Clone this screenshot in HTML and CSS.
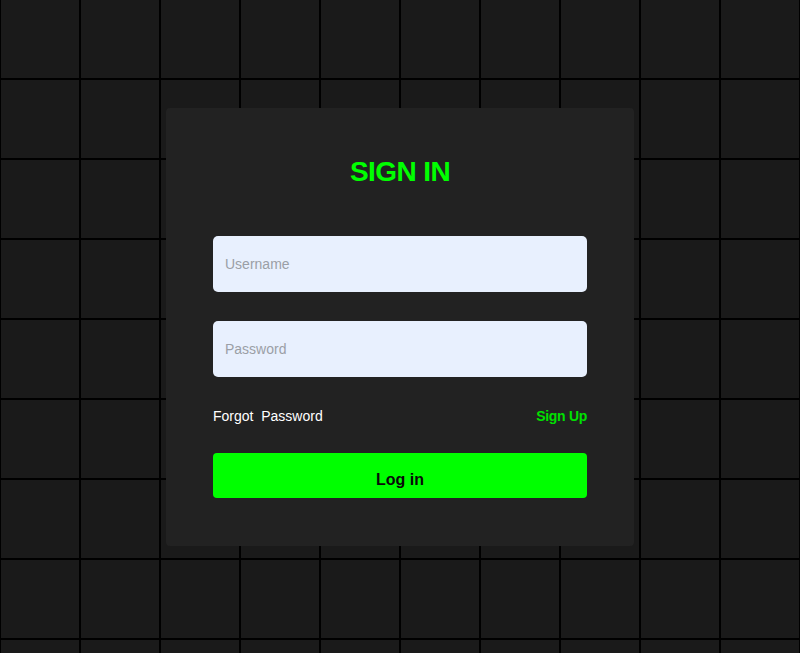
FILE: index.html
```html
<!DOCTYPE html>
<html lang="en">
<head>
<meta charset="utf-8">
<title>Sign In</title>
<link rel="stylesheet" href="styles.css">
</head>
<body>
<main class="page">
  <form class="card" onsubmit="return false">
    <h1 class="title">SIGN IN</h1>
    <input class="field" type="text" placeholder="Username">
    <input class="field field-gap" type="password" placeholder="Password">
    <div class="links">
      <a class="forgot" href="#">Forgot&nbsp; Password</a>
      <a class="signup" href="#">Sign Up</a>
    </div>
    <button class="login" type="submit">Log in</button>
  </form>
</main>
</body>
</html>
```
FILE: styles.css
```css
html, body {
  margin: 0;
  padding: 0;
  height: 100%;
}
body {
  font-family: "Liberation Sans", Arial, Helvetica, sans-serif;
  background-color: #1a1a1a;
  background-image:
    linear-gradient(to right, #000 0, #000 1px, transparent 1px, transparent 79px, #000 79px),
    linear-gradient(to bottom, #000 0, #000 1px, transparent 1px, transparent 79px, #000 79px);
  background-size: 80px 80px;
  background-position: 0 -1px;
  overflow: hidden;
}
.page {
  height: 653px;
  display: flex;
  align-items: center;
  justify-content: center;
}
.card {
  width: 374px;
  padding: 48px 47px 48px;
  background: #222222;
  border-radius: 4px;
  display: flex;
  flex-direction: column;
}
.title {
  margin: 0 0 48px;
  font-size: 28px;
  line-height: 32px;
  font-weight: 700;
  letter-spacing: -0.6px;
  color: #00ff00;
  text-align: center;
}
.field {
  box-sizing: border-box;
  height: 56px;
  width: 100%;
  margin: 0;
  padding: 0 12px;
  border: none;
  border-radius: 5px;
  background: #e8f0fe;
  font-family: inherit;
  font-size: 14px;
  color: #222;
  outline: none;
}
.field::placeholder {
  color: #9b9fa6;
}
.field-gap {
  margin-top: 29px;
}
.links {
  margin-top: 31px;
  display: flex;
  justify-content: space-between;
  font-size: 14px;
  line-height: 16px;
}
.forgot {
  color: #ffffff;
  text-decoration: none;
}
.signup {
  color: #00e000;
  font-weight: 700;
  letter-spacing: -0.3px;
  text-decoration: none;
}
.login {
  margin-top: 29px;
  box-sizing: border-box;
  height: 45px;
  padding: 18px 0 9px;
  border: none;
  border-radius: 4px;
  background: #00ff00;
  color: #0a0a0a;
  font-family: inherit;
  font-size: 16px;
  line-height: 18px;
  font-weight: 700;
  cursor: pointer;
}
```
